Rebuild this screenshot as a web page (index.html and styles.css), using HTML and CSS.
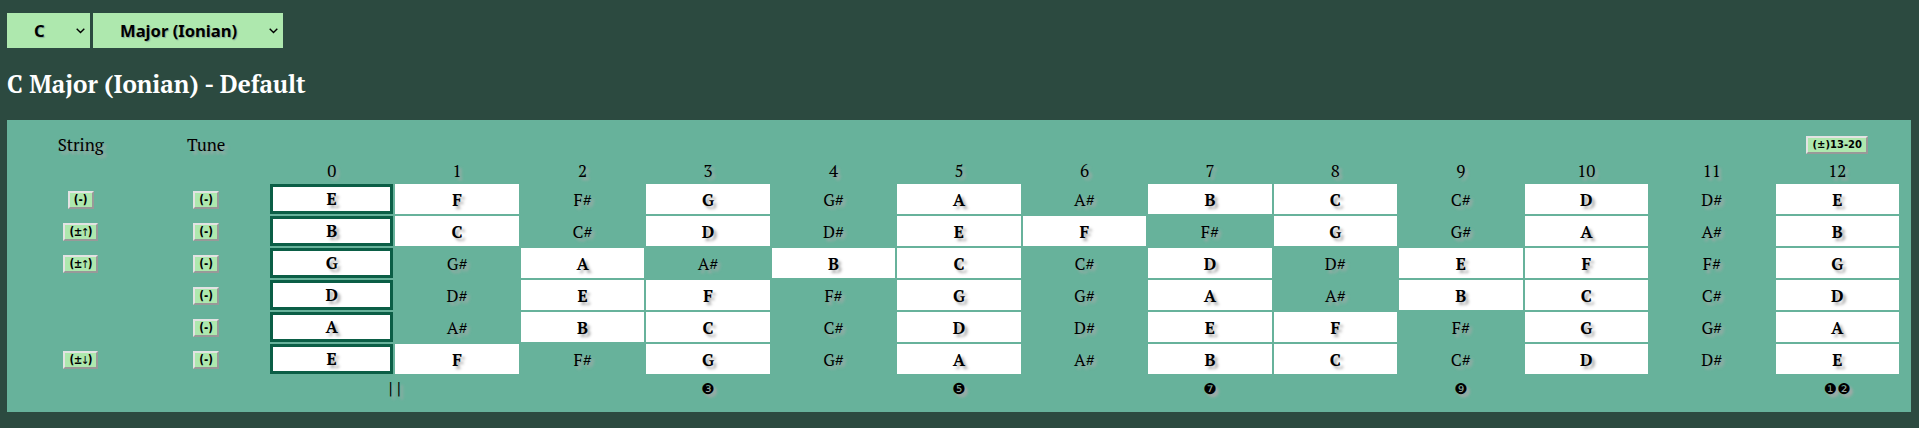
FILE: index.html
```
<!DOCTYPE html>
<html lang="en">
<head>
<meta charset="utf-8">
<title>C Major (Ionian) - Default</title>
<link rel="stylesheet" href="styles.css">
</head>
<body>
<div class="controls">
  <div class="picker key"><span>C</span><svg width="9" height="6" viewBox="0 0 9 6"><path d="M.7.8 4.5 4.6 8.3.8"/></svg></div>
  <div class="picker scale"><span>Major (Ionian)</span><svg width="9" height="6" viewBox="0 0 9 6"><path d="M.7.8 4.5 4.6 8.3.8"/></svg></div>
</div>
<h1>C Major (Ionian) - Default</h1>
<main class="board">
  <div class="row head"><span>String</span><span>Tune</span><span class="more"><button>(±)13-20</button></span></div>
  <div class="row nums"><span></span><span></span><span>0</span><span>1</span><span>2</span><span>3</span><span>4</span><span>5</span><span>6</span><span>7</span><span>8</span><span>9</span><span>10</span><span>11</span><span>12</span></div>
  <div class="row"><span><button>(-)</button></span><span><button>(-)</button></span><b class="open">E</b><b>F</b><span>F#</span><b>G</b><span>G#</span><b>A</b><span>A#</span><b>B</b><b>C</b><span>C#</span><b>D</b><span>D#</span><b>E</b></div>
  <div class="row"><span><button class="wide">(±<i>↑</i>)</button></span><span><button>(-)</button></span><b class="open">B</b><b>C</b><span>C#</span><b>D</b><span>D#</span><b>E</b><b>F</b><span>F#</span><b>G</b><span>G#</span><b>A</b><span>A#</span><b>B</b></div>
  <div class="row"><span><button class="wide">(±<i>↑</i>)</button></span><span><button>(-)</button></span><b class="open">G</b><span>G#</span><b>A</b><span>A#</span><b>B</b><b>C</b><span>C#</span><b>D</b><span>D#</span><b>E</b><b>F</b><span>F#</span><b>G</b></div>
  <div class="row"><span></span><span><button>(-)</button></span><b class="open">D</b><span>D#</span><b>E</b><b>F</b><span>F#</span><b>G</b><span>G#</span><b>A</b><span>A#</span><b>B</b><b>C</b><span>C#</span><b>D</b></div>
  <div class="row"><span></span><span><button>(-)</button></span><b class="open">A</b><span>A#</span><b>B</b><b>C</b><span>C#</span><b>D</b><span>D#</span><b>E</b><b>F</b><span>F#</span><b>G</b><span>G#</span><b>A</b></div>
  <div class="row"><span><button class="wide">(±<i>↓</i>)</button></span><span><button>(-)</button></span><b class="open">E</b><b>F</b><span>F#</span><b>G</b><span>G#</span><b>A</b><span>A#</span><b>B</b><b>C</b><span>C#</span><b>D</b><span>D#</span><b>E</b></div>
  <div class="row marks"><span></span><span></span><span class="nut">||</span><span></span><span>❸</span><span></span><span>❺</span><span></span><span>❼</span><span></span><span>❾</span><span></span><span></span><span>❶❷</span></div>
</main>
</body>
</html>
```
FILE: styles.css
```
body {
  margin: 0;
  padding: 13px 8px 0 7px;
  background: #2c4a40;
  color: #000;
  font: 17px/24px "PT Serif", "Liberation Serif", serif;
}
.controls {
  display: flex;
  gap: 3px;
  height: 35px;
}
.picker {
  display: flex;
  align-items: center;
  justify-content: space-between;
  box-sizing: border-box;
  padding: 0 5px 0 27px;
  background: #aee8ae;
  font: bold 16.6px/35px "Noto Sans", sans-serif;
  text-shadow: 1px 1px 1px #8a9;
}
.key { width: 83px; }
.scale { width: 190px; }
.picker svg {
  fill: none;
  stroke: #000;
  stroke-width: 1.4;
}
h1 {
  margin: 20px 0 19px;
  color: #fff;
  font-size: 24.2px;
  line-height: 33px;
}
.board {
  display: grid;
  grid-template-rows: 24px 24px repeat(6, 30px) 24px;
  row-gap: 2px;
  padding: 12px;
  background: #67b29b;
  text-shadow: 3px 3px 3px #a9a9a9;
}
.row {
  display: grid;
  grid-template-columns: repeat(15, 1fr);
  column-gap: 2px;
  line-height: 22px;
}
.row > * {
  display: flex;
  align-items: center;
  justify-content: center;
  box-sizing: border-box;
  padding-top: 1px;
}
.row > b { background: #fff; }
.row > .open {
  padding: 0;
  border: 3px solid #0b5e46;
}
.head > .more { grid-column: 15; }
.marks > span { font-family: "DejaVu Sans", sans-serif; font-size: 15px; }
.marks > .nut {
  grid-column: span 2;
  padding: 0 0 0 4px;
  font-size: 14px;
  letter-spacing: 3.3px;
}
button {
  box-sizing: border-box;
  width: 26px;
  height: 18px;
  margin: 1px 0 0;
  padding: 0;
  border: 2px solid;
  border-color: #e3e3e3 #999 #999 #e3e3e3;
  background: #aee8ae;
  color: #000;
  font: bold 11.5px/14px "DejaVu Sans Condensed", "DejaVu Sans", sans-serif;
}
button.wide { width: 35px; letter-spacing: -0.6px; }
button i {
  display: inline-block;
  width: 7px;
  margin-left: -1px;
  font: normal 11px/10px "DejaVu Sans Condensed", "DejaVu Sans", sans-serif;
}
.more button { width: 62px; font: bold 10px/14px "DejaVu Sans", sans-serif; }
```
